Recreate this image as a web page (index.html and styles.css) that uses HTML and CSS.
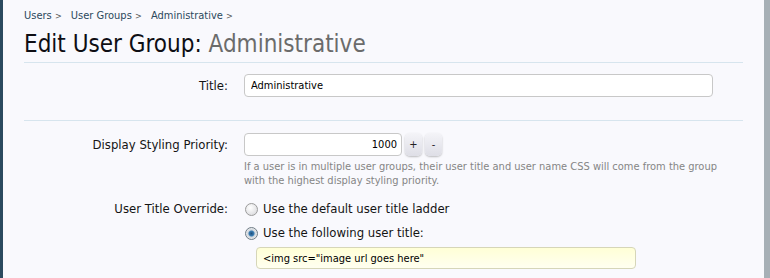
FILE: index.html
```html
<!DOCTYPE html>
<html lang="en">
<head>
  <meta charset="UTF-8" />
  <title>Edit User Group: Administrative</title>
  <link rel="stylesheet" href="styles.css">
</head>
<body>

  <div class="page">
    <div class="content">
      <div class="breadcrumb">
        <a href="#">Users</a> <span class="sep">&gt;</span>
        <a href="#">User Groups</a> <span class="sep">&gt;</span>
        <a href="#">Administrative</a> <span class="sep">&gt;</span>
      </div>

      <h1 class="heading">Edit User Group: <em>Administrative</em></h1>

      <form class="edit-form">
        <div class="row">
          <label class="label" for="title">Title:</label>
          <div class="control">
            <input id="title" class="text-input wide" type="text" value="Administrative" />
          </div>
        </div>

        <div class="row open">
          <label class="label" for="priority">Display Styling Priority:</label>
          <div class="control">
            <div class="spin">
              <input id="priority" class="text-input number" type="text" value="1000" />
              <button type="button" class="spin-btn">+</button>
              <button type="button" class="spin-btn">-</button>
            </div>
            <p class="explain">If a user is in multiple user groups, their user title and user name CSS will come from the group with the highest display styling priority.</p>
          </div>
        </div>

        <div class="row plain">
          <div class="label">User Title Override:</div>
          <div class="control">
            <label class="choice"><input type="radio" name="override" /> Use the default user title ladder</label>
            <label class="choice"><input type="radio" name="override" checked /> Use the following user title:</label>
            <input class="text-input custom" type="text" value='&lt;img src="image url goes here"' />
          </div>
        </div>
      </form>
    </div>
  </div>

</body>
</html>
```

FILE: styles.css
```css
* {
  box-sizing: border-box;
  margin: 0;
  padding: 0;
}

html, body {
  height: 100%;
}

body {
  font-family: 'DejaVu Sans Condensed', 'DejaVu Sans', sans-serif;
  background: #fff;
  color: #141414;
  overflow: hidden;
}

.page {
  height: 100%;
  background: #f9f9fd;
  border-left: 3px solid #2b4a5f;
  border-right: 6px solid #a7b0b6;
}

.content {
  padding: 8px 21px 0 21px;
}

.breadcrumb {
  font-size: 11px;
  line-height: 16px;
}

.breadcrumb a {
  color: #2b485c;
  text-decoration: none;
}

.breadcrumb .sep {
  color: #555;
  font-size: 9px;
  margin-right: 6px;
}

.heading {
  font-weight: normal;
  font-size: 24px;
  line-height: 30px;
  color: #0e0e14;
  margin-top: 5px;
  padding-bottom: 3px;
  border-bottom: 1px solid #d7e5ee;
}

.heading em {
  font-style: normal;
  color: #6b6b6b;
}

.row {
  display: grid;
  grid-template-columns: 204px 1fr;
  column-gap: 16px;
  padding: 11px 0 22px;
  border-bottom: 1px solid #d7e5ee;
}

.row + .row {
  padding-top: 12px;
}

.row.open {
  border-bottom: none;
  padding-bottom: 9px;
}

.row.plain {
  padding-top: 0;
  border-bottom: none;
}

.label {
  text-align: right;
  font-size: 13px;
  line-height: 24px;
  color: #141414;
}

.text-input {
  font-family: inherit;
  font-size: 11px;
  color: #000;
  height: 23px;
  padding: 0 6px;
  border: 1px solid #c8c8c8;
  border-radius: 4px;
  background: #fff;
}

.text-input.wide {
  width: 469px;
}

.spin {
  display: flex;
  align-items: center;
  gap: 3px;
}

.text-input.number {
  width: 158px;
  text-align: right;
  padding-right: 4px;
}

.spin-btn {
  width: 17px;
  height: 23px;
  border: none;
  border-radius: 5px;
  background: linear-gradient(#f4f4f8, #dedee6);
  box-shadow: 0 1px 2px rgba(0, 0, 0, 0.25);
  font-family: inherit;
  font-size: 11px;
  color: #222;
}

.explain {
  font-size: 11px;
  line-height: 14px;
  color: #858585;
  margin-top: 4px;
  max-width: 476px;
}

.choice {
  display: flex;
  align-items: center;
  gap: 5px;
  font-size: 13px;
  line-height: 24px;
}

.choice input {
  appearance: none;
  width: 13px;
  height: 13px;
  margin-left: 1px;
  border: 1px solid #9b9b9b;
  border-radius: 50%;
  background: radial-gradient(circle at 40% 35%, #ffffff, #d4d4d8);
}

.choice input:checked {
  border-color: #6f7c86;
  background: radial-gradient(circle at 50% 50%, #1f4f7a 0, #3a7eb5 2.5px, #cfd6dc 3.5px, #f0f0f2 6px);
}

.text-input.custom {
  display: block;
  margin: 2px 0 0 12px;
  width: 380px;
  height: 22px;
  background: linear-gradient(#ffffd6, #fffff0);
  border-color: #d6d6b8;
}
```
